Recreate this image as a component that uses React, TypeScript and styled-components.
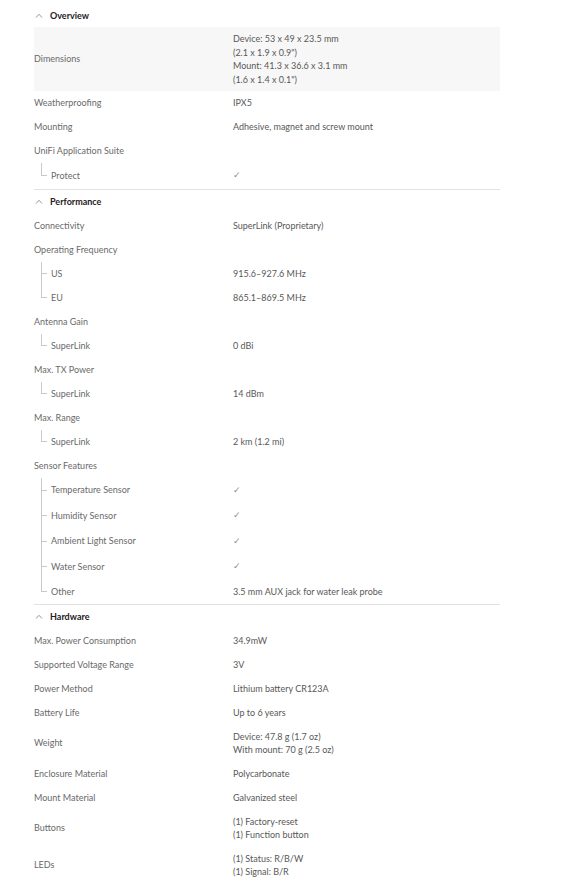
import styled, { createGlobalStyle } from "styled-components";

type Spec = {
  label: string;
  value?: string[];
  check?: boolean;
  highlight?: boolean;
  children?: Spec[];
};

type Section = { title: string; specs: Spec[] };

const sections: Section[] = [
  {
    title: "Overview",
    specs: [
      {
        label: "Dimensions",
        highlight: true,
        value: ["Device: 53 x 49 x 23.5 mm", "(2.1 x 1.9 x 0.9\")", "Mount: 41.3 x 36.6 x 3.1 mm", "(1.6 x 1.4 x 0.1\")"],
      },
      { label: "Weatherproofing", value: ["IPX5"] },
      { label: "Mounting", value: ["Adhesive, magnet and screw mount"] },
      { label: "UniFi Application Suite", children: [{ label: "Protect", check: true }] },
    ],
  },
  {
    title: "Performance",
    specs: [
      { label: "Connectivity", value: ["SuperLink (Proprietary)"] },
      {
        label: "Operating Frequency",
        children: [
          { label: "US", value: ["915.6–927.6 MHz"] },
          { label: "EU", value: ["865.1–869.5 MHz"] },
        ],
      },
      { label: "Antenna Gain", children: [{ label: "SuperLink", value: ["0 dBi"] }] },
      { label: "Max. TX Power", children: [{ label: "SuperLink", value: ["14 dBm"] }] },
      { label: "Max. Range", children: [{ label: "SuperLink", value: ["2 km (1.2 mi)"] }] },
      {
        label: "Sensor Features",
        children: [
          { label: "Temperature Sensor", check: true },
          { label: "Humidity Sensor", check: true },
          { label: "Ambient Light Sensor", check: true },
          { label: "Water Sensor", check: true },
          { label: "Other", value: ["3.5 mm AUX jack for water leak probe"] },
        ],
      },
    ],
  },
  {
    title: "Hardware",
    specs: [
      { label: "Max. Power Consumption", value: ["34.9mW"] },
      { label: "Supported Voltage Range", value: ["3V"] },
      { label: "Power Method", value: ["Lithium battery CR123A"] },
      { label: "Battery Life", value: ["Up to 6 years"] },
      { label: "Weight", value: ["Device: 47.8 g (1.7 oz)", "With mount: 70 g (2.5 oz)"] },
      { label: "Enclosure Material", value: ["Polycarbonate"] },
      { label: "Mount Material", value: ["Galvanized steel"] },
      { label: "Buttons", value: ["(1) Factory-reset", "(1) Function button"] },
      { label: "LEDs", value: ["(1) Status: R/B/W", "(1) Signal: B/R"] },
    ],
  },
];

const SpecRow = ({ spec, branch, last }: { spec: Spec; branch?: boolean; last?: boolean }) => (
  <Row $highlight={spec.highlight}>
    <Label>
      {branch && <Branch $last={last} />}
      <LabelText>{spec.label}</LabelText>
    </Label>
    <Value>
      {spec.check && <Check>✓</Check>}
      {spec.value?.map((line) => (
        <div key={line}>{line}</div>
      ))}
    </Value>
  </Row>
);

const App = () => {
  return (
    <>
      <GlobalStyle />
      <Page>
        {sections.map((section, i) => (
          <Group key={section.title} $first={i === 0}>
            <Header>
              <svg width="8" height="5" viewBox="0 0 8 5">
                <path d="M1 4.5 L4 1.3 L7 4.5" fill="none" stroke="#8a8a8a" strokeWidth="0.9" />
              </svg>
              <Title>{section.title}</Title>
            </Header>
            {section.specs.map((spec) => (
              <div key={spec.label}>
                <SpecRow spec={spec} />
                {spec.children?.map((child, j) => (
                  <SpecRow
                    key={child.label}
                    spec={child}
                    branch
                    last={j === spec.children!.length - 1}
                  />
                ))}
              </div>
            ))}
          </Group>
        ))}
      </Page>
    </>
  );
};

export default App;

const GlobalStyle = createGlobalStyle`
  body {
    margin: 0;
    background: #ffffff;
    font-family: Lato, "Liberation Sans", sans-serif;
  }
`;

const Page = styled.div`
  width: 466px;
  padding: 3px 0 0 34px;
`;

const Group = styled.section<{ $first?: boolean }>`
  border-top: ${(p) => (p.$first ? "none" : "1px solid #e2e2e2")};
`;

const Header = styled.div`
  height: 24px;
  display: flex;
  align-items: center;
  gap: 7px;
  padding-left: 1px;
`;

const Title = styled.span`
  font-size: 9px;
  font-weight: 700;
  color: #1f2023;
`;

const Row = styled.div<{ $highlight?: boolean }>`
  display: grid;
  grid-template-columns: 199px 1fr;
  min-height: 24px;
  background: ${(p) => (p.$highlight ? "#f7f7f7" : "transparent")};
`;

const Label = styled.div`
  display: flex;
  align-items: center;
  font-size: 9px;
  color: #6a6a6a;
`;

const LabelText = styled.span`
  line-height: 14px;
`;

const Branch = styled.span<{ $last?: boolean }>`
  flex: none;
  align-self: stretch;
  width: 6px;
  margin: 0 4px 0 7px;
  background:
    linear-gradient(#cacaca, #cacaca) left top / 1px ${(p) => (p.$last ? "50%" : "100%")} no-repeat,
    linear-gradient(#cacaca, #cacaca) left center / 100% 1px no-repeat;
`;

const Value = styled.div`
  align-self: center;
  padding: 5px 0;
  font-size: 9px;
  line-height: 13.5px;
  color: #585858;
`;

const Check = styled.span`
  display: inline-block;
  font-family: "DejaVu Sans", sans-serif;
  font-size: 9px;
  line-height: 15.5px;
  color: #8c8c8c;
`;
